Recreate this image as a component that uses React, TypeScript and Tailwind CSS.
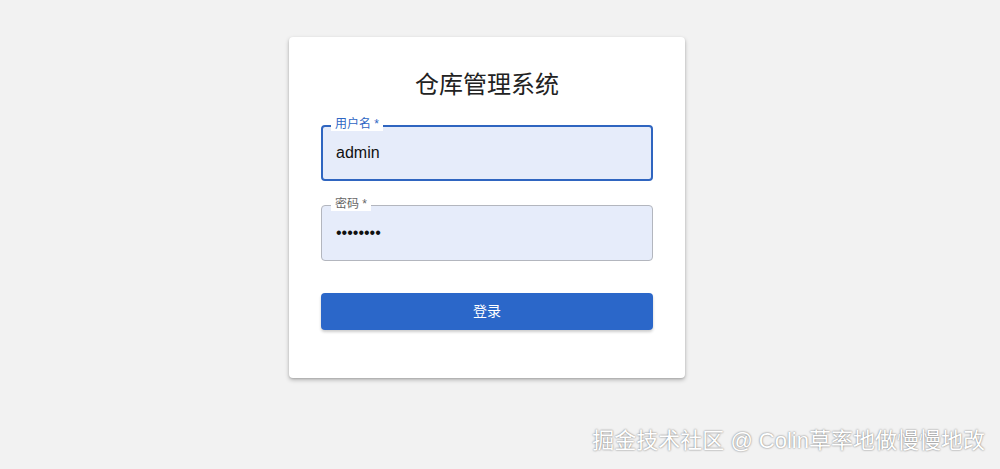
import React, { useState } from 'react';

export default function App() {
  const [username, setUsername] = useState('admin');
  const [password, setPassword] = useState('password');

  return (
    <div
      className="relative min-h-[469px] w-full bg-[#f2f2f2] pl-[289px] pt-[37px]"
      style={{ fontFamily: '"Liberation Sans", "Noto Sans CJK SC", sans-serif' }}
    >
      {/* Login card */}
      <div className="w-[396px] rounded bg-white px-8 pt-[31px] pb-[48px] shadow-[0_2px_4px_rgba(0,0,0,0.25),0_1px_2px_rgba(0,0,0,0.12)]">
        <h1 className="h-[34px] text-center text-[24px] leading-[34px] text-[#222]">仓库管理系统</h1>

        <div className="mt-[23px] flex flex-col gap-6">
          {/* Username */}
          <div className="relative">
            <input
              value={username}
              onChange={(e) => setUsername(e.target.value)}
              className="h-[56px] w-full rounded border-2 border-[#2f65c0] bg-[#e6ecfa] px-[13px] text-[16px] text-[#111] outline-none"
            />
            <label className="absolute left-[10px] top-[-8px] bg-white px-[4px] text-[12px] leading-[14px] text-[#2e66c4]">
              用户名 *
            </label>
          </div>

          {/* Password */}
          <div className="relative">
            <input
              type="password"
              value={password}
              onChange={(e) => setPassword(e.target.value)}
              className="h-[56px] w-full rounded border border-[#b3b6be] bg-[#e6ecfa] px-[14px] text-[16px] text-[#111] outline-none"
            />
            <label className="absolute left-[10px] top-[-8px] bg-white px-[4px] text-[12px] leading-[14px] text-[#666]">
              密码 *
            </label>
          </div>
        </div>

        <button className="mt-[32px] h-[37px] w-full rounded bg-[#2b67c9] text-[14px] text-white shadow-[0_2px_3px_rgba(0,0,0,0.2)]">
          登录
        </button>
      </div>

      {/* Watermark */}
      <div className="absolute right-[15px] top-[427px] text-[22px] leading-[28px] text-white [text-shadow:0_0_2px_rgba(0,0,0,0.6)]">
        掘金技术社区 @ Colin草率地做慢慢地改
      </div>
    </div>
  );
}
